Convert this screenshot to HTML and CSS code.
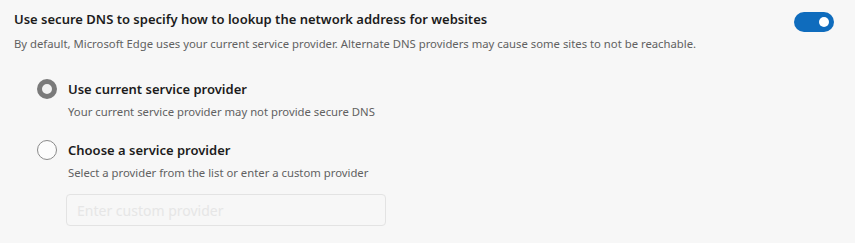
FILE: index.html
```html
<!DOCTYPE html>
<html>
<head>
<meta charset="utf-8">
<link rel="stylesheet" href="styles.css">
</head>
<body>
<div class="panel">
  <div class="header">
    <div class="header-text">
      <div class="title">Use secure DNS to specify how to lookup the network address for websites</div>
      <div class="desc">By default, Microsoft Edge uses your current service provider. Alternate DNS providers may cause some sites to not be reachable.</div>
    </div>
    <div class="toggle"><span class="knob"></span></div>
  </div>
  <div class="options">
    <div class="option">
      <span class="radio checked"></span>
      <div class="option-text">
        <div class="label">Use current service provider</div>
        <div class="sub">Your current service provider may not provide secure DNS</div>
      </div>
    </div>
    <div class="option">
      <span class="radio"></span>
      <div class="option-text">
        <div class="label">Choose a service provider</div>
        <div class="sub">Select a provider from the list or enter a custom provider</div>
        <input class="custom" type="text" placeholder="Enter custom provider" disabled>
      </div>
    </div>
  </div>
</div>
</body>
</html>
```
FILE: styles.css
```css
html, body {
  margin: 0;
  padding: 0;
  background: #f7f7f7;
  font-family: "Noto Sans", "Open Sans", sans-serif;
}
.panel {
  width: 855px;
  height: 243px;
  box-sizing: border-box;
  padding: 9px 21px 0 14px;
}
.header {
  display: flex;
  justify-content: space-between;
  align-items: flex-start;
}
.title {
  font-size: 13px;
  font-weight: 600;
  color: #1c1c1c;
  line-height: 20px;
}
.desc {
  margin-top: 7px;
  font-size: 11.3px;
  color: #616161;
  line-height: 16px;
}
.toggle {
  margin-top: 3px;
  width: 40px;
  height: 20px;
  border-radius: 10px;
  background: #0f6cbd;
  position: relative;
}
.knob {
  position: absolute;
  right: 5px;
  top: 5px;
  width: 10px;
  height: 10px;
  border-radius: 50%;
  background: #fff;
}
.options {
  margin-top: 27px;
  padding-left: 23px;
  display: flex;
  flex-direction: column;
  gap: 20px;
}
.option {
  display: flex;
  gap: 11px;
  align-items: flex-start;
}
.radio {
  width: 20px;
  height: 20px;
  box-sizing: border-box;
  border-radius: 50%;
  border: 1px solid #8a8a8a;
  background: #fcfcfc;
  flex: none;
}
.radio.checked {
  border: 5px solid #7a7a7a;
  background: #f2f2f2;
}
.label {
  font-size: 13px;
  font-weight: 600;
  color: #1c1c1c;
  line-height: 20px;
}
.sub {
  margin-top: 5px;
  font-size: 11.3px;
  color: #616161;
  line-height: 16px;
}
.custom {
  display: block;
  margin-top: 13px;
  margin-left: -2px;
  width: 320px;
  height: 32px;
  box-sizing: border-box;
  border: 1px solid #e3e3e3;
  border-radius: 4px;
  background: #f7f7f7;
  padding: 0 10px;
  font-family: inherit;
  font-size: 14px;
}
.custom::placeholder {
  color: #e6e6e6;
}
```
